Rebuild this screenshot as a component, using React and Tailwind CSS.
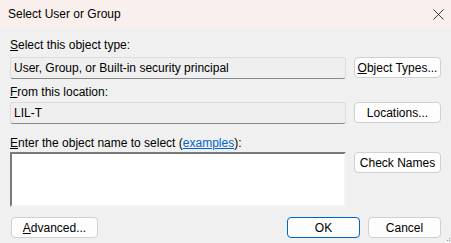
import { X } from 'lucide-react';

function Btn({ children, primary, className = '' }) {
  return (
    <button
      className={`h-[21px] rounded-[4px] border bg-[#fdfdfd] text-[12px] leading-none text-black ${
        primary ? 'border-[#0067c0]' : 'border-[#d0d0d0]'
      } ${className}`}
    >
      {children}
    </button>
  );
}

function Field({ children }) {
  return (
    <div className="flex h-[22px] flex-1 items-center rounded-[3px] border border-[#dcdcdc] border-b-[#8a8a8a] bg-[#efefef] pl-[3px]">
      {children}
    </div>
  );
}

export default function App() {
  return (
    <div
      className="relative flex h-[243px] w-[451px] flex-col bg-[#f0f0f0] text-[12px] text-black"
      style={{ fontFamily: '"Liberation Sans", Arial, sans-serif' }}
    >
      <div className="flex h-[28px] items-center justify-between bg-[#f9f0ee] pl-[8px] pr-[3px]">
        <span>Select User or Group</span>
        <X className="h-[19px] w-[19px] text-[#1a1a1a]" strokeWidth={1.1} />
      </div>

      <div className="flex flex-col px-[10px]">
        <div className="mt-[10px] h-[15px] leading-[15px]">
          <u>S</u>elect this object type:
        </div>
        <div className="mt-[4px] flex items-start gap-[8px]">
          <Field>User, Group, or Built-in security principal</Field>
          <Btn className="w-[87px]">
            <u>O</u>bject Types...
          </Btn>
        </div>

        <div className="mt-[6px] h-[15px] leading-[15px]">
          <u>F</u>rom this location:
        </div>
        <div className="mt-[2px] flex items-start gap-[8px]">
          <Field>LIL-T</Field>
          <Btn className="w-[87px]">Locations...</Btn>
        </div>

        <div className="mt-[12px] h-[15px] leading-[15px]">
          <u>E</u>nter the object name to select (
          <span className="text-[#0066cc] underline">examples</span>):
        </div>
        <div className="mt-[1px] flex items-start gap-[8px]">
          <div className="h-[55px] flex-1 border-2 border-t-[#7a7a7a] border-l-[#7a7a7a] border-r-[#f4f4f4] border-b-[#f4f4f4] bg-white" />
          <Btn className="w-[87px]">Check Names</Btn>
        </div>

        <div className="mt-[10px] flex items-center">
          <Btn className="ml-[1px] w-[87px]">
            <u>A</u>dvanced...
          </Btn>
          <div className="flex-1" />
          <Btn primary className="w-[73px]">
            OK
          </Btn>
          <Btn className="ml-[8px] w-[73px]">Cancel</Btn>
        </div>
      </div>

      <div className="absolute bottom-[2px] right-[1px] grid grid-cols-3 gap-[1px]">
        <span />
        <span />
        <span className="h-[1px] w-[1px] bg-[#999]" />
        <span />
        <span className="h-[1px] w-[1px] bg-[#999]" />
        <span className="h-[1px] w-[1px] bg-[#999]" />
      </div>
    </div>
  );
}
